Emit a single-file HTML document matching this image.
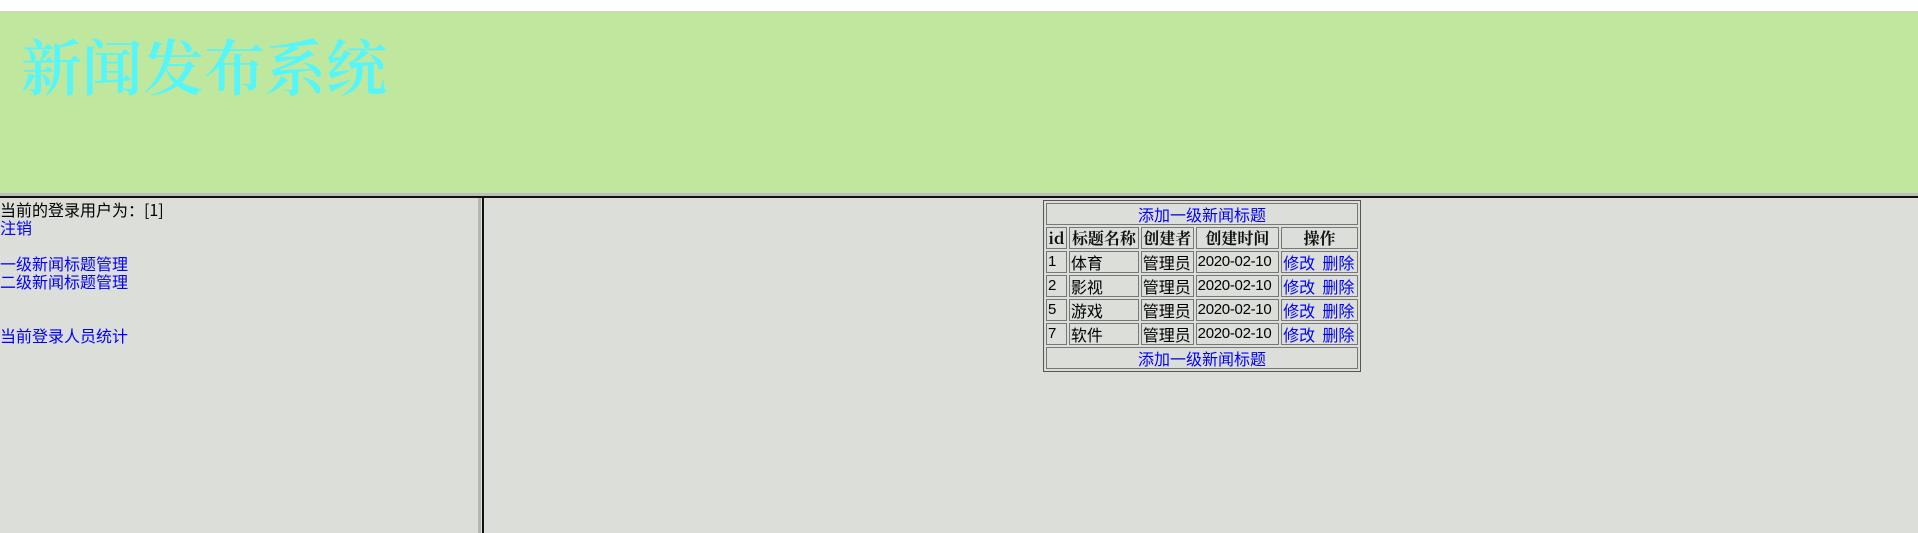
<!DOCTYPE html>
<html><head><meta charset="utf-8"><style>
*{margin:0;padding:0;box-sizing:border-box}
body{width:1918px;height:533px;overflow:hidden;background:#dcded9;font-family:"Liberation Mono","Noto Sans CJK SC",monospace;font-size:16px;position:relative}
.bar{position:absolute;left:0;top:0;width:1918px;height:12px;background:#fff;border-bottom:1px solid #d0d0d0}
.top{position:absolute;left:0;top:12px;width:1918px;height:181px;background:#bfe79d}
.title{position:absolute;left:21px;top:18px;font-family:"Noto Serif CJK SC","Liberation Serif",serif;font-size:61px;line-height:70px;color:#55f5fa;font-weight:600}
.sep{position:absolute;left:0;top:193px;width:1918px;height:3px;background:#bdbdbd}
.sep2{position:absolute;left:0;top:196px;width:1918px;height:2px;background:#111}
.vl{position:absolute;left:478px;top:198px;width:3px;height:335px;background:#b5b5b5}
.vl2{position:absolute;left:482px;top:198px;width:2px;height:335px;background:#111}
.left{position:absolute;left:0;top:200px;line-height:18px;font-family:"Noto Sans CJK SC",sans-serif;font-size:16px}
a{color:#0000ff;text-decoration:none}
table{position:absolute;left:1043px;top:200px;width:318px;border:1px solid #555;border-spacing:2px;border-collapse:separate}
td,th{border:1px solid #777;height:22px;padding:0 1px;font-size:16px;font-family:"Noto Sans CJK SC",sans-serif;line-height:20px;white-space:nowrap;overflow:hidden}
th{font-weight:bold;color:#111;font-family:"Noto Serif CJK SC",serif}
.c{text-align:center}
.d{font-family:"Liberation Sans",sans-serif;font-size:15px;letter-spacing:-.3px}
</style></head><body>
<div class="bar"></div>
<div class="top"><div class="title">新闻发布系统</div></div>
<div class="sep"></div><div class="sep2"></div>
<div class="vl"></div><div class="vl2"></div>
<div class="left">当前的登录用户为：[1]<br><a>注销</a><br><br><a>一级新闻标题管理</a><br><a>二级新闻标题管理</a><br><br><br><a>当前登录人员统计</a></div>
<table>
<colgroup><col style="width:21px"><col style="width:70px"><col style="width:53px"><col style="width:84px"><col style="width:77px"></colgroup>
<tr><td colspan="5" class="c"><a>添加一级新闻标题</a></td></tr>
<tr><th>id</th><th>标题名称</th><th>创建者</th><th>创建时间</th><th>操作</th></tr>
<tr><td class="d">1</td><td>体育</td><td>管理员</td><td class="d">2020-02-10</td><td><a>修改</a>&nbsp; <a>删除</a></td></tr>
<tr><td class="d">2</td><td>影视</td><td>管理员</td><td class="d">2020-02-10</td><td><a>修改</a>&nbsp; <a>删除</a></td></tr>
<tr><td class="d">5</td><td>游戏</td><td>管理员</td><td class="d">2020-02-10</td><td><a>修改</a>&nbsp; <a>删除</a></td></tr>
<tr><td class="d">7</td><td>软件</td><td>管理员</td><td class="d">2020-02-10</td><td><a>修改</a>&nbsp; <a>删除</a></td></tr>
<tr><td colspan="5" class="c"><a>添加一级新闻标题</a></td></tr>
</table>
</body></html>
